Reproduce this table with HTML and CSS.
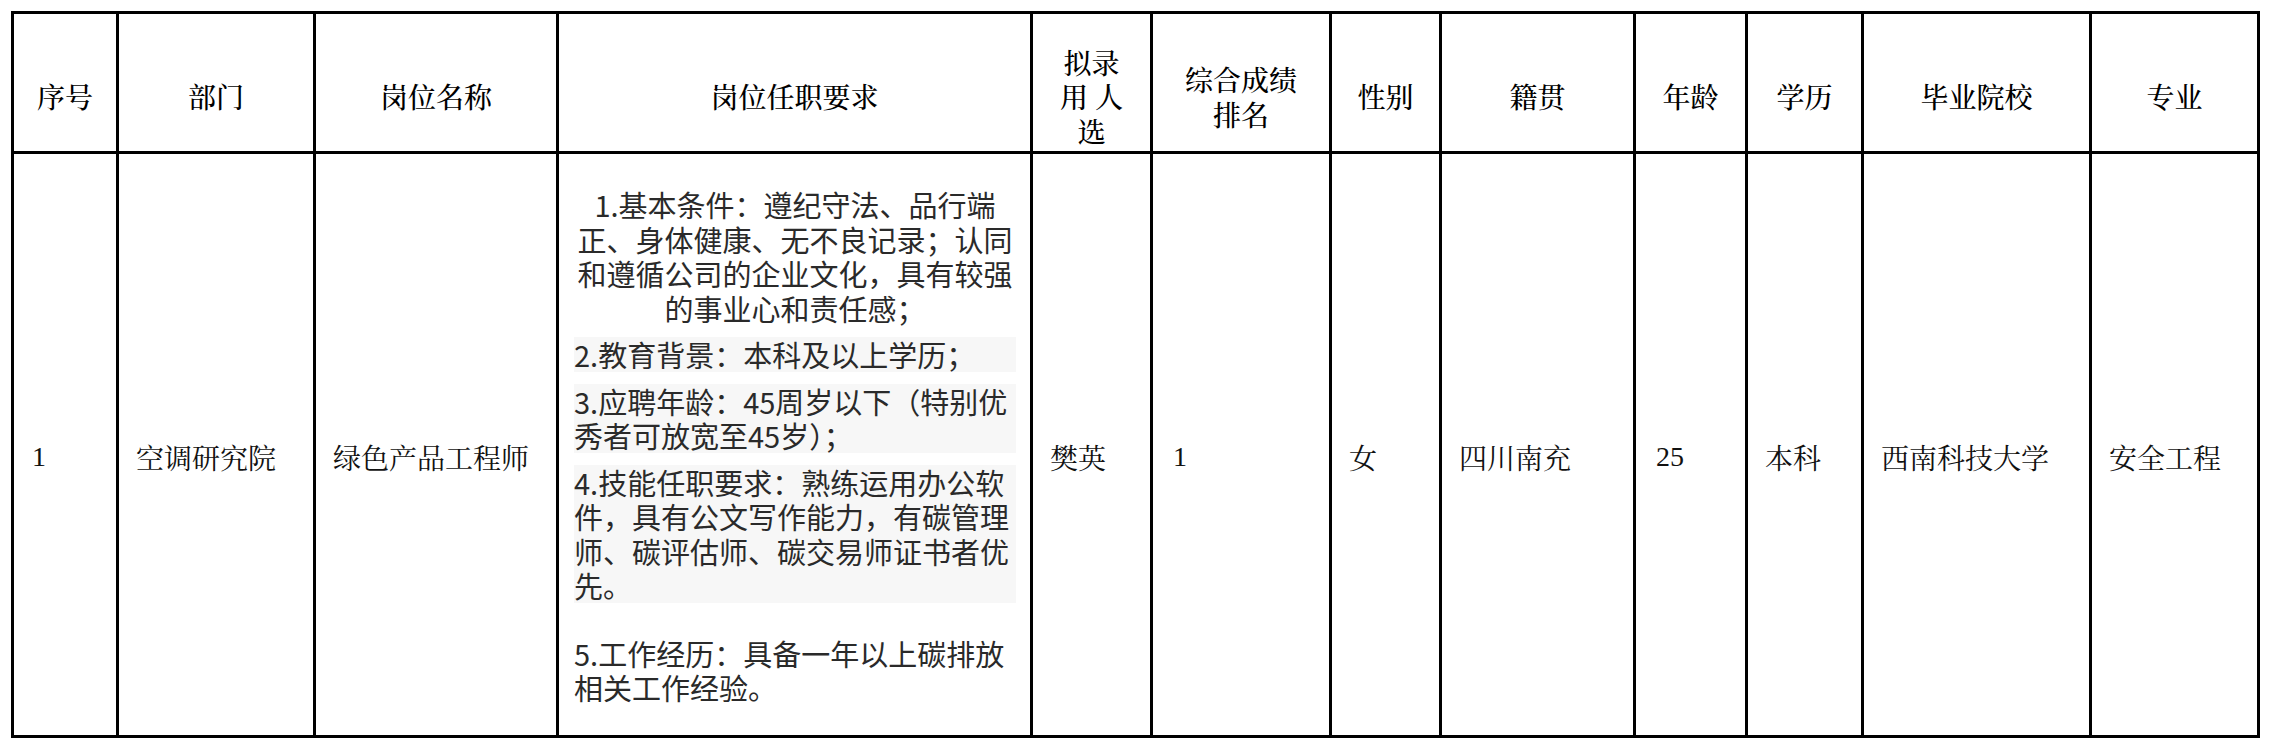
FILE: index.html
```html
<!DOCTYPE html>
<html lang="zh-CN">
<head>
<meta charset="utf-8">
<title>拟录用人员名单</title>
<link rel="stylesheet" href="styles.css">
</head>
<body>
<table class="roster">
  <colgroup>
    <col class="c-no"><col class="c-dept"><col class="c-post"><col class="c-req">
    <col class="c-name"><col class="c-rank"><col class="c-sex"><col class="c-home">
    <col class="c-age"><col class="c-edu"><col class="c-school"><col class="c-major">
  </colgroup>
  <thead>
    <tr class="head-row">
      <th>序号</th>
      <th>部门</th>
      <th>岗位名称</th>
      <th>岗位任职要求</th>
      <th>拟录<br>用&nbsp;人<br>选</th>
      <th>综合成绩<br>排名</th>
      <th>性别</th>
      <th>籍贯</th>
      <th>年龄</th>
      <th>学历</th>
      <th>毕业院校</th>
      <th>专业</th>
    </tr>
  </thead>
  <tbody>
    <tr class="body-row">
      <td class="num first">1</td>
      <td>空调研究院</td>
      <td>绿色产品工程师</td>
      <td class="req">
        <p class="req-p centered">1.基本条件：遵纪守法、品行端<br>正、身体健康、无不良记录；认同<br>和遵循公司的企业文化，具有较强<br>的事业心和责任感；</p>
        <p class="req-p shaded">2.教育背景：本科及以上学历；</p>
        <p class="req-p shaded">3.应聘年龄：45周岁以下（特别优<br>秀者可放宽至45岁）；</p>
        <p class="req-p shaded">4.技能任职要求：熟练运用办公软<br>件，具有公文写作能力，有碳管理<br>师、碳评估师、碳交易师证书者优<br>先。</p>
        <p class="req-p spaced">5.工作经历：具备一年以上碳排放<br>相关工作经验。</p>
      </td>
      <td>樊英</td>
      <td class="num">1</td>
      <td>女</td>
      <td>四川南充</td>
      <td class="num">25</td>
      <td>本科</td>
      <td>西南科技大学</td>
      <td>安全工程</td>
    </tr>
  </tbody>
</table>
</body>
</html>
```

FILE: styles.css
```css
html, body {
  margin: 0;
  padding: 0;
  background: #ffffff;
}

body {
  padding: 11px 0 0 11px;
}

.roster {
  border-collapse: collapse;
  table-layout: fixed;
  width: 2249px;
  font-family: "Noto Serif CJK SC", "Source Han Serif SC", "AR PL UMing CN", "Noto Sans CJK SC", serif;
  color: #000;
}

.c-no { width: 105px; }
.c-dept { width: 197px; }
.c-post { width: 243px; }
.c-req { width: 474px; }
.c-name { width: 120px; }
.c-rank { width: 179px; }
.c-sex { width: 110px; }
.c-home { width: 194px; }
.c-age { width: 112px; }
.c-edu { width: 116px; }
.c-school { width: 228px; }
.c-major { width: 168px; }

.roster th,
.roster td {
  border: 3px solid #000;
}

.head-row th {
  height: 109px;
  padding: 28px 4px 0;
  font-size: 28px;
  line-height: 34.5px;
  font-weight: 500;
  text-align: center;
  vertical-align: middle;
  white-space: nowrap;
}

.body-row td {
  padding: 26px 6px 0 17px;
  font-size: 28px;
  line-height: 34px;
  font-weight: 400;
  color: #111;
  text-align: left;
  vertical-align: middle;
  white-space: nowrap;
}

.body-row td.num {
  font-family: "Liberation Serif", "Times New Roman", serif;
  padding-left: 20px;
}

.body-row td.first {
  padding-left: 18px;
}

.body-row td.req {
  padding: 33px 14px 30px 15px;
  vertical-align: top;
  white-space: normal;
  font-family: "Noto Sans CJK SC", "Noto Sans", sans-serif;
  font-size: 29px;
  line-height: 34.5px;
  color: #2a2a2a;
}

.req-p {
  margin: 0 0 12px;
}

.req-p.centered {
  text-align: center;
}

.req-p.shaded {
  background: #f7f7f7;
}

.req-p.spaced {
  margin-top: 33px;
  margin-bottom: 0;
}
```
